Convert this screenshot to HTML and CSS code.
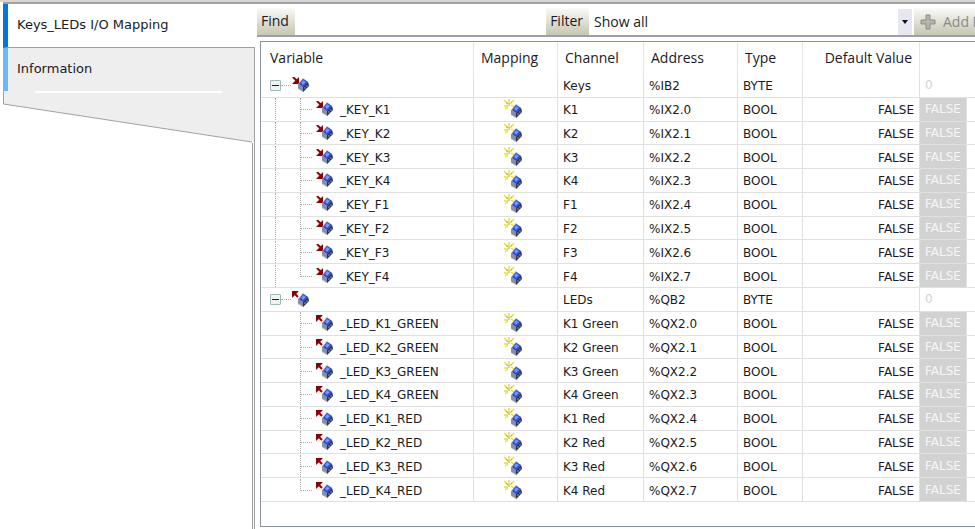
FILE: index.html
```
<!DOCTYPE html>
<html lang="en">
<head>
    <meta charset="UTF-8">
    <meta name="viewport" content="width=device-width, initial-scale=1.0">
    <title>Keys_LEDs I/O Mapping</title>
    <link rel="stylesheet" href="styles.css">
</head>
<body>
    <!-- icons used by the mapping table -->
    <svg class="sprite" aria-hidden="true">
        <symbol id="cube" viewBox="0 0 12 14">
            <path d="M6 0 L11 4 L12 8 L6 14 L1 11 L1 6 Z" fill="#a3abb5"/>
            <path d="M6 1 L11 4 L6 9 L2 6 Z" fill="#2445e8"/>
            <path d="M6 2 L9 4 L6 7 L4 5 Z" fill="#7396ff"/>
            <path d="M11 4 L12 8 L6 14 L6 9 Z" fill="#30343c"/>
            <path d="M1 6 L6 9 L6 13 L1 10 Z" fill="#8290a3"/>
            <path d="M8 9 v2 M10 7 v2" stroke="#8f98a5"/>
        </symbol>
        <symbol id="in" viewBox="0 0 18 16">
            <path d="M1 0 L5 4" stroke="#8b0008" stroke-width="2"/>
            <path d="M7 0 V7 H0 Z" fill="#8b0008"/>
            <use href="#cube" x="5" y="1" width="12" height="14"/>
        </symbol>
        <symbol id="out" viewBox="0 0 18 16">
            <path d="M2 2 L6 6" stroke="#8b0008" stroke-width="2"/>
            <path d="M0 0 H7 L0 7 Z" fill="#8b0008"/>
            <use href="#cube" x="5" y="2" width="12" height="14"/>
        </symbol>
        <symbol id="new" viewBox="0 0 18 20">
            <path d="M5 0 V4 M0 1 L4 5 M10 1 L6 5 M0 7 H4 M1 10 L4 8 M7 6 L10 8" stroke="#e9df2c" stroke-width="1.4"/>
            <path d="M5 4 V7 M2 3 L4 5 M8 3 L7 4" stroke="#aaa65a"/>
            <use href="#cube" x="6" y="5" width="12" height="14"/>
        </symbol>
    </svg>

    <div class="editor">
        <nav class="sidebar">
            <a href="#mapping" class="tab active">Keys_LEDs I/O Mapping</a>
            <a href="#information" class="tab">Information</a>
            <svg class="slope" viewBox="0 0 251 52" preserveAspectRatio="none" aria-hidden="true">
                <path d="M0 0 H251 V51 L0 13 Z" fill="#eeeeee"/>
                <path d="M0.5 0 V13 L249 51" fill="none" stroke="#a0a0a0"/>
                <path d="M32 1 H219" stroke="#ffffff" stroke-width="2"/>
            </svg>
            <div class="rest"></div>
        </nav>

        <main class="content" id="mapping">
            <div class="toolbar">
                <label class="tool" for="find">Find</label>
                <input type="text" id="find" class="find">
                <label class="tool" for="filter">Filter</label>
                <div class="filter">
                    <select id="filter">
                        <option>Show all</option>
                    </select>
                </div>
                <button class="tool add" disabled>
                    <svg width="16" height="16" viewBox="0 0 16 16" aria-hidden="true"><path d="M6 1 H10 V6 H15 V10 H10 V15 H6 V10 H1 V6 H6 Z" fill="#b4b4ae" stroke="#8c8c88"/></svg>
                    Add FB for IO Channel
                </button>
            </div>

            <div class="grid">
                <table>
                    <colgroup>
                        <col class="c-variable"><col class="c-mapping"><col class="c-channel"><col class="c-address"><col class="c-type"><col class="c-default"><col class="c-current"><col>
                    </colgroup>
                    <thead>
                        <tr><th>Variable</th><th>Mapping</th><th>Channel</th><th>Address</th><th>Type</th><th class="right">Default Value</th><th></th><th></th></tr>
                    </thead>
                    <tbody class="keys">
                        <tr class="group"><td><div class="tree"><button class="toggle" aria-label="Collapse Keys"></button><i class="dots"></i><svg class="io"><use href="#in"/></svg></div></td><td></td><td>Keys</td><td>%IB2</td><td>BYTE</td><td></td><td class="current">0</td><td></td></tr>
                        <tr><td><div class="tree"><i class="trunk"></i><i class="branch"></i><svg class="io"><use href="#in"/></svg><span>_KEY_K1</span></div></td><td><svg class="new"><use href="#new"/></svg></td><td>K1</td><td>%IX2.0</td><td>BOOL</td><td class="right">FALSE</td><td class="current">FALSE</td><td></td></tr>
                        <tr><td><div class="tree"><i class="trunk"></i><i class="branch"></i><svg class="io"><use href="#in"/></svg><span>_KEY_K2</span></div></td><td><svg class="new"><use href="#new"/></svg></td><td>K2</td><td>%IX2.1</td><td>BOOL</td><td class="right">FALSE</td><td class="current">FALSE</td><td></td></tr>
                        <tr><td><div class="tree"><i class="trunk"></i><i class="branch"></i><svg class="io"><use href="#in"/></svg><span>_KEY_K3</span></div></td><td><svg class="new"><use href="#new"/></svg></td><td>K3</td><td>%IX2.2</td><td>BOOL</td><td class="right">FALSE</td><td class="current">FALSE</td><td></td></tr>
                        <tr><td><div class="tree"><i class="trunk"></i><i class="branch"></i><svg class="io"><use href="#in"/></svg><span>_KEY_K4</span></div></td><td><svg class="new"><use href="#new"/></svg></td><td>K4</td><td>%IX2.3</td><td>BOOL</td><td class="right">FALSE</td><td class="current">FALSE</td><td></td></tr>
                        <tr><td><div class="tree"><i class="trunk"></i><i class="branch"></i><svg class="io"><use href="#in"/></svg><span>_KEY_F1</span></div></td><td><svg class="new"><use href="#new"/></svg></td><td>F1</td><td>%IX2.4</td><td>BOOL</td><td class="right">FALSE</td><td class="current">FALSE</td><td></td></tr>
                        <tr><td><div class="tree"><i class="trunk"></i><i class="branch"></i><svg class="io"><use href="#in"/></svg><span>_KEY_F2</span></div></td><td><svg class="new"><use href="#new"/></svg></td><td>F2</td><td>%IX2.5</td><td>BOOL</td><td class="right">FALSE</td><td class="current">FALSE</td><td></td></tr>
                        <tr><td><div class="tree"><i class="trunk"></i><i class="branch"></i><svg class="io"><use href="#in"/></svg><span>_KEY_F3</span></div></td><td><svg class="new"><use href="#new"/></svg></td><td>F3</td><td>%IX2.6</td><td>BOOL</td><td class="right">FALSE</td><td class="current">FALSE</td><td></td></tr>
                        <tr><td><div class="tree"><i class="trunk"></i><i class="branch"></i><svg class="io"><use href="#in"/></svg><span>_KEY_F4</span></div></td><td><svg class="new"><use href="#new"/></svg></td><td>F4</td><td>%IX2.7</td><td>BOOL</td><td class="right">FALSE</td><td class="current">FALSE</td><td></td></tr>
                    </tbody>
                    <tbody class="leds">
                        <tr class="group"><td><div class="tree"><button class="toggle" aria-label="Collapse LEDs"></button><i class="dots"></i><svg class="io"><use href="#out"/></svg></div></td><td></td><td>LEDs</td><td>%QB2</td><td>BYTE</td><td></td><td class="current">0</td><td></td></tr>
                        <tr><td><div class="tree"><i class="trunk"></i><i class="branch"></i><svg class="io"><use href="#out"/></svg><span>_LED_K1_GREEN</span></div></td><td><svg class="new"><use href="#new"/></svg></td><td>K1 Green</td><td>%QX2.0</td><td>BOOL</td><td class="right">FALSE</td><td class="current">FALSE</td><td></td></tr>
                        <tr><td><div class="tree"><i class="trunk"></i><i class="branch"></i><svg class="io"><use href="#out"/></svg><span>_LED_K2_GREEN</span></div></td><td><svg class="new"><use href="#new"/></svg></td><td>K2 Green</td><td>%QX2.1</td><td>BOOL</td><td class="right">FALSE</td><td class="current">FALSE</td><td></td></tr>
                        <tr><td><div class="tree"><i class="trunk"></i><i class="branch"></i><svg class="io"><use href="#out"/></svg><span>_LED_K3_GREEN</span></div></td><td><svg class="new"><use href="#new"/></svg></td><td>K3 Green</td><td>%QX2.2</td><td>BOOL</td><td class="right">FALSE</td><td class="current">FALSE</td><td></td></tr>
                        <tr><td><div class="tree"><i class="trunk"></i><i class="branch"></i><svg class="io"><use href="#out"/></svg><span>_LED_K4_GREEN</span></div></td><td><svg class="new"><use href="#new"/></svg></td><td>K4 Green</td><td>%QX2.3</td><td>BOOL</td><td class="right">FALSE</td><td class="current">FALSE</td><td></td></tr>
                        <tr><td><div class="tree"><i class="trunk"></i><i class="branch"></i><svg class="io"><use href="#out"/></svg><span>_LED_K1_RED</span></div></td><td><svg class="new"><use href="#new"/></svg></td><td>K1 Red</td><td>%QX2.4</td><td>BOOL</td><td class="right">FALSE</td><td class="current">FALSE</td><td></td></tr>
                        <tr><td><div class="tree"><i class="trunk"></i><i class="branch"></i><svg class="io"><use href="#out"/></svg><span>_LED_K2_RED</span></div></td><td><svg class="new"><use href="#new"/></svg></td><td>K2 Red</td><td>%QX2.5</td><td>BOOL</td><td class="right">FALSE</td><td class="current">FALSE</td><td></td></tr>
                        <tr><td><div class="tree"><i class="trunk"></i><i class="branch"></i><svg class="io"><use href="#out"/></svg><span>_LED_K3_RED</span></div></td><td><svg class="new"><use href="#new"/></svg></td><td>K3 Red</td><td>%QX2.6</td><td>BOOL</td><td class="right">FALSE</td><td class="current">FALSE</td><td></td></tr>
                        <tr><td><div class="tree"><i class="trunk"></i><i class="branch"></i><svg class="io"><use href="#out"/></svg><span>_LED_K4_RED</span></div></td><td><svg class="new"><use href="#new"/></svg></td><td>K4 Red</td><td>%QX2.7</td><td>BOOL</td><td class="right">FALSE</td><td class="current">FALSE</td><td></td></tr>
                    </tbody>
                </table>
            </div>
        </main>
    </div>
</body>
</html>
```
FILE: styles.css
```
* {
    box-sizing: border-box;
}
body {
    margin: 0;
    background: #ffffff;
    color: #1a1a24;
    font-family: 'DejaVu Sans', sans-serif;
    font-size: 12px;
    overflow: hidden;
}
.sprite {
    position: absolute;
    width: 0;
    height: 0;
}
.editor {
    display: flex;
    height: 100vh;
    padding-left: 3px;
    border-top: 2px solid #d4d4d4;
}

/* left tabs */
.sidebar {
    display: flex;
    flex-direction: column;
    flex: 0 0 252px;
    border-top: 2px solid #a0a0a0;
}
.tab {
    height: 43px;
    padding: 12px 9px;
    border-left: 5px solid #6cb8fa;
    border-right: 1px solid #a0a0a0;
    background: #eeeeee;
    color: #1a1a24;
    font-size: 13px;
    line-height: 18px;
    text-decoration: none;
}
.tab.active {
    height: 44px;
    border-left-color: #0078d7;
    border-right: none;
    border-bottom: 1px solid #a0a0a0;
    background: #ffffff;
}
.slope {
    display: block;
    width: 100%;
    height: 52px;
    border-right: 1px solid #a0a0a0;
}
.rest {
    flex: 1;
    border-right: 3px double #a0a0a0;
}

/* toolbar */
.content {
    display: flex;
    flex-direction: column;
    flex: 1;
    min-width: 0;
    padding: 0 0 2px 2px;
    border-top: 2px solid #a0a0a0;
}
.toolbar {
    display: flex;
    height: 33px;
    padding-top: 4px;
    border-bottom: 2px solid #9c9cb4;
    font-family: 'Open Sans', sans-serif;
    font-size: 14px;
    overflow: hidden;
}
.tool {
    flex: none;
    padding: 0 6px 0 4px;
    background: linear-gradient(#fafaf7, #c6c6b2);
    line-height: 26px;
}
.find {
    flex: 1;
    min-width: 0;
    padding: 0 4px;
    border: none;
    outline: none;
    font: inherit;
}
.filter {
    display: flex;
    position: relative;
    flex: 0 0 325px;
    padding-right: 2px;
}
.filter select {
    flex: 1;
    padding: 0 5px;
    border: none;
    background: #ffffff;
    color: #1a1a24;
    font: inherit;
    appearance: none;
}
.filter::before {
    content: "";
    position: absolute;
    top: 1px;
    right: 2px;
    width: 14px;
    height: 26px;
    background: #e7e7f1;
    pointer-events: none;
}
.filter::after {
    content: "";
    position: absolute;
    top: 12px;
    right: 6px;
    border: 3px solid transparent;
    border-top: 4px solid #101010;
    border-bottom: none;
    pointer-events: none;
}
.add {
    display: flex;
    flex: 0 0 61px;
    align-items: center;
    gap: 7px;
    padding: 0 0 0 6px;
    border: none;
    color: #8b8b86;
    font: inherit;
    white-space: nowrap;
    overflow: hidden;
}
.add svg {
    flex: none;
}

/* mapping table */
.grid {
    flex: 1;
    margin: 4px 0 0 3px;
    border: 1px solid #8a939c;
    border-right: none;
    overflow: hidden;
}
table {
    width: 100%;
    height: 460px;
    border-collapse: separate;
    border-spacing: 0;
    table-layout: fixed;
}
.c-variable {
    width: 213px;
}
.c-mapping {
    width: 84px;
}
.c-channel {
    width: 86px;
}
.c-address {
    width: 94px;
}
.c-type {
    width: 65px;
}
.c-default {
    width: 117px;
}
.c-current {
    width: 47px;
}
th {
    height: 32px;
    padding: 0 7px;
    border-right: 1px solid #e6e6e6;
    font-family: 'Open Sans', sans-serif;
    font-size: 14px;
    font-weight: normal;
    line-height: 20px;
    text-align: left;
}
th:first-child {
    padding-left: 9px;
}
td {
    padding: 2px 5px 0;
    border-right: 1px solid #e0e0e0;
    border-bottom: 1px solid #e0e0e0;
    line-height: 20px;
    white-space: nowrap;
}
td:first-child,
td:nth-child(2) {
    padding: 0;
}
th:nth-child(n+7),
td:last-child {
    border-right: none;
}
.right {
    text-align: right;
}
td.current {
    padding-top: 0;
    background: #d2d2d2;
    color: #f6f6f6;
}
.group td.current {
    border-right: none;
    background: #ffffff;
    color: #d2d2d2;
}
.tree {
    display: flex;
    align-items: center;
    height: 22px;
    padding-left: 9px;
}
.tree span {
    padding-top: 2px;
}
.toggle {
    width: 11px;
    height: 11px;
    padding: 4px 2px;
    border: 1px solid #9fb9bb;
    border-radius: 1px;
    background: linear-gradient(#202020, #202020) center / 7px 1px no-repeat #f2f2f0;
}
.dots {
    width: 10px;
    margin-right: 1px;
    border-top: 1px dotted #a8a8a8;
}
.trunk {
    align-self: stretch;
    width: 25px;
    margin-left: 5px;
}
.keys .trunk {
    border-left: 1px dotted #a8a8a8;
}
.branch {
    align-self: stretch;
    width: 16px;
    border-left: 1px dotted #a8a8a8;
    background: repeating-linear-gradient(90deg, #a8a8a8 0 1px, transparent 1px 2px) 0 11px / 12px 1px no-repeat;
}
tr:last-child .branch {
    height: 12px;
    align-self: flex-start;
}
.io {
    flex: none;
    width: 18px;
    height: 16px;
    margin-right: 6px;
}
.new {
    display: block;
    width: 18px;
    height: 20px;
    margin: 0 auto 0 30px;
}
```
